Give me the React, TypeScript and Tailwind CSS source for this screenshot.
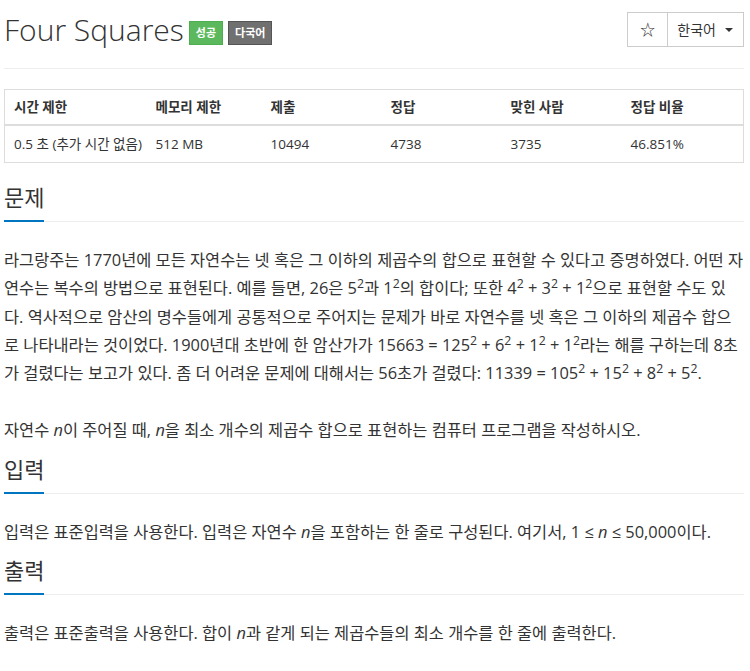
export default function App() {
    const font = { fontFamily: '"Open Sans", "Noto Sans CJK KR", sans-serif' }
    return (
        <div className="pl-[4px] pr-[6px] text-[#333] bg-white" style={font}>
            <Header />
            <InfoTable />
            <Section title="문제">
                <p className="mb-[29px]">
                    라그랑주는 1770년에 모든 자연수는 넷 혹은 그 이하의 제곱수의 합으로 표현할 수 있다고 증명하였다. 어떤 자연수는 복수의 방법으로 표현된다. 예를 들면, 26은 5<sup>2</sup>과 1<sup>2</sup>의 합이다; 또한 4<sup>2</sup> + 3<sup>2</sup> + 1<sup>2</sup>으로 표현할 수도 있다. 역사적으로 암산의 명수들에게 공통적으로 주어지는 문제가 바로 자연수를 넷 혹은 그 이하의 제곱수 합으로 나타내라는 것이었다. 1900년대 초반에 한 암산가가 15663 = 125<sup>2</sup> + 6<sup>2</sup> + 1<sup>2</sup> + 1<sup>2</sup>라는 해를 구하는데 8초가 걸렸다는 보고가 있다. 좀 더 어려운 문제에 대해서는 56초가 걸렸다: 11339 = 105<sup>2</sup> + 15<sup>2</sup> + 8<sup>2</sup> + 5<sup>2</sup>.
                </p>
                <p>
                    자연수 <i>n</i>이 주어질 때, <i>n</i>을 최소 개수의 제곱수 합으로 표현하는 컴퓨터 프로그램을 작성하시오.
                </p>
            </Section>
            <Section title="입력">
                <p>
                    입력은 표준입력을 사용한다. 입력은 자연수 <i>n</i>을 포함하는 한 줄로 구성된다. 여기서, 1 ≤ <i>n</i> ≤ 50,000이다.
                </p>
            </Section>
            <Section title="출력">
                <p>
                    출력은 표준출력을 사용한다. 합이 <i>n</i>과 같게 되는 제곱수들의 최소 개수를 한 줄에 출력한다.
                </p>
            </Section>
        </div>
    )
}

function Header() {
    return (
        <div className="flex items-start justify-between pt-[10px] pb-[20px] border-b border-[#eee]">
            <div className="flex items-center gap-[5px] pt-[2px]">
                <h1 className="text-[30px] leading-[36px] font-light text-[#333]">Four Squares</h1>
                <span className="mt-[6px] px-[6px] h-[24px] flex items-center bg-[#5cb85c] border border-[#4cae4c] text-white text-[11px] font-bold">성공</span>
                <span className="mt-[6px] px-[6px] h-[24px] flex items-center bg-[#707070] border border-[#555] text-white text-[11px] font-bold">다국어</span>
            </div>
            <div className="mt-[2px] flex h-[35px] border border-[#ccc] text-[14px] text-[#333]">
                <span className="w-[40px] flex items-center justify-center border-r border-[#ccc] text-[15px]">☆</span>
                <span className="flex items-center gap-[9px] pl-[9px] pr-[10px]">
                    한국어
                    <span className="w-0 h-0 border-l-[4px] border-r-[4px] border-t-[4px] border-l-transparent border-r-transparent border-t-[#333]" />
                </span>
            </div>
        </div>
    )
}

function InfoTable() {
    const heads = ["시간 제한", "메모리 제한", "제출", "정답", "맞힌 사람", "정답 비율"]
    const vals = ["0.5 초 (추가 시간 없음)", "512 MB", "10494", "4738", "3735", "46.851%"]
    const widths = ["w-[142px]", "w-[115px]", "w-[120px]", "w-[120px]", "w-[120px]", ""]
    return (
        <table className="mt-[20px] mb-[19px] w-full border border-[#ddd] text-[13.5px] border-collapse table-fixed">
            <thead>
                <tr className="border-b-2 border-[#ddd]">
                    {heads.map((h, i) => (
                        <th key={h} className={`${widths[i]} text-left font-bold px-[9px] h-[35px] whitespace-nowrap`}>{h}</th>
                    ))}
                </tr>
            </thead>
            <tbody>
                <tr>
                    {vals.map((v) => (
                        <td key={v} className="px-[9px] h-[38px] whitespace-nowrap">{v}</td>
                    ))}
                </tr>
            </tbody>
        </table>
    )
}

function Section({ title, children }: { title: string; children: React.ReactNode }) {
    return (
        <section className="mt-[9px]">
            <div className="flex border-b border-[#eee]">
                <h2 className="text-[22px] leading-[30px] pb-[8px] border-b-2 border-[#0076c0] -mb-px">{title}</h2>
            </div>
            <div className="pt-[24px] text-[16.4px] leading-[28.3px] break-all">
                {children}
            </div>
        </section>
    )
}
